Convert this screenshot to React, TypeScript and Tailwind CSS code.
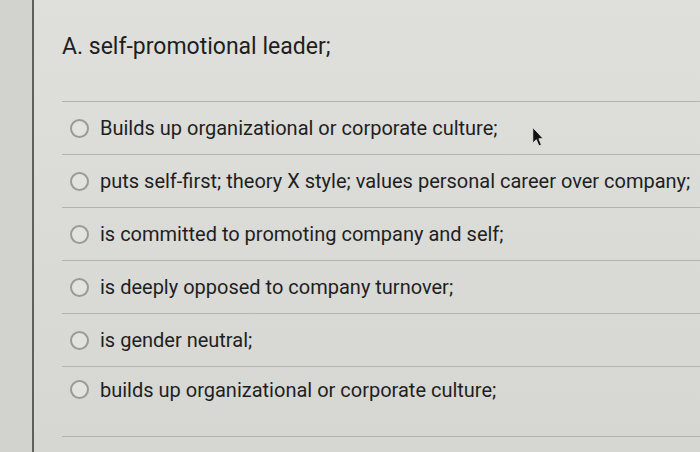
const options = [
  "Builds up organizational or corporate culture;",
  "puts self-first; theory X style; values personal career over company;",
  "is committed to promoting company and self;",
  "is deeply opposed to company turnover;",
  "is gender neutral;",
  "builds up organizational or corporate culture;",
];

const Radio = () => (
  <span className="w-[19px] h-[19px] rounded-full border-2 border-[#9a9a97] bg-[#e2e2df] shrink-0" />
);

const Cursor = () => (
  <svg
    className="absolute left-[531px] top-[126px]"
    width="14"
    height="22"
    viewBox="0 0 16 24"
  >
    <path d="M2 1 L2 19 L6 15 L9 22 L12 21 L9 14 L14 14 Z" fill="#111" stroke="#e8e8e8" strokeWidth="1" />
  </svg>
);

const App = () => {
  return (
    <div
      className="relative w-[700px] h-[452px] overflow-hidden flex bg-gradient-to-b from-[#dfdfdc] to-[#d6d6d3]"
      style={{ fontFamily: "Roboto, 'Liberation Sans', sans-serif" }}
    >
      <div className="w-[32px] shrink-0 bg-[#d2d2cf]" />
      <div className="w-[2px] shrink-0 bg-[#5f5f5d]" />
      <div className="flex-1 pl-[28px]">
        <p className="pt-[33px] h-[101px] text-[23px] leading-[28px] text-[#1e1e1e]">
          A. self-promotional leader;
        </p>
        <div className="border-b border-[#b3b3af]">
          {options.map((opt, i) => (
            <div
              key={i}
              className={`flex items-center gap-[11px] pl-[8px] border-t border-[#b3b3af] ${
                i === options.length - 1 ? "h-[70px] pb-[24px]" : "h-[53px]"
              }`}
            >
              <Radio />
              <span className="text-[20px] leading-[24px] text-[#1f1f1f] whitespace-nowrap">{opt}</span>
            </div>
          ))}
        </div>
      </div>
      <Cursor />
    </div>
  );
};

export default App;
